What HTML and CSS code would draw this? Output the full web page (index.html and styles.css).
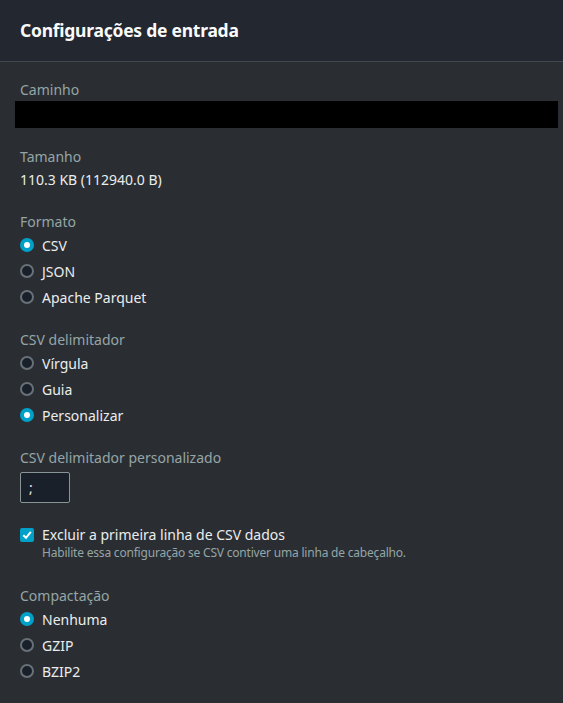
FILE: index.html
```html
<!DOCTYPE html>
<html lang="pt">
<head>
<meta charset="utf-8">
<link rel="stylesheet" href="styles.css">
</head>
<body>
<div class="panel">
  <div class="header"><h2 class="title">Configurações de entrada</h2></div>
  <div class="content">
    <div class="field first">
      <div class="label">Caminho</div>
      <div class="redacted"></div>
    </div>
    <div class="field size">
      <div class="label">Tamanho</div>
      <div class="value">110.3 KB (112940.0 B)</div>
    </div>
    <div class="field format">
      <div class="label">Formato</div>
      <div class="radio checked"><span class="dot"></span><span>CSV</span></div>
      <div class="radio"><span class="dot"></span><span>JSON</span></div>
      <div class="radio"><span class="dot"></span><span>Apache Parquet</span></div>
    </div>
    <div class="field">
      <div class="label">CSV delimitador</div>
      <div class="radio"><span class="dot"></span><span>Vírgula</span></div>
      <div class="radio"><span class="dot"></span><span>Guia</span></div>
      <div class="radio checked"><span class="dot"></span><span>Personalizar</span></div>
    </div>
    <div class="field">
      <div class="label">CSV delimitador personalizado</div>
      <div class="input">;</div>
    </div>
    <div class="field check-field">
      <div class="checkrow">
        <span class="box"><svg width="10" height="10" viewBox="0 0 10 10"><path d="M1.3 5.2 L4 7.8 L8.8 1.8" fill="none" stroke="#fff" stroke-width="2"/></svg></span>
        <div>
          <div class="check-label">Excluir a primeira linha de CSV dados</div>
          <div class="desc">Habilite essa configuração se CSV contiver uma linha de cabeçalho.</div>
        </div>
      </div>
    </div>
    <div class="field comp">
      <div class="label">Compactação</div>
      <div class="radio checked"><span class="dot"></span><span>Nenhuma</span></div>
      <div class="radio"><span class="dot"></span><span>GZIP</span></div>
      <div class="radio"><span class="dot"></span><span>BZIP2</span></div>
    </div>
  </div>
</div>
</body>
</html>
```
FILE: styles.css
```css
html, body {
  margin: 0;
  padding: 0;
  background: #2a2e33;
  font-family: "Noto Sans", "Open Sans", sans-serif;
}
.panel {
  width: 563px;
  min-height: 703px;
  background: #2a2e33;
}
.header {
  background: #232730;
  height: 61px;
  border-bottom: 1px solid #414750;
  padding: 0 20px;
  display: flex;
  align-items: center;
}
.title {
  margin: 0 0 2px 0;
  font-size: 17.5px;
  font-weight: 700;
  color: #fafafa;
  line-height: 24px;
  letter-spacing: -0.25px;
}
.content {
  padding: 0 20px 0 20px;
}
.field {
  margin-top: 20px;
}
.field.first {
  margin-top: 18px;
}
.field.size {
  margin-top: 19px;
}
.field.format {
  margin-top: 22px;
}
.label {
  font-size: 14px;
  line-height: 20px;
  color: #95a5a6;
}
.redacted {
  background: #000;
  height: 27px;
  margin: 1px -15px 0 -5px;
}
.value {
  margin-top: 3px;
  font-size: 14px;
  line-height: 20px;
  color: #eaeded;
}
.radio {
  display: flex;
  align-items: center;
  height: 26px;
  font-size: 14px;
  color: #eaeded;
}
.dot {
  box-sizing: border-box;
  width: 14px;
  height: 14px;
  border-radius: 50%;
  border: 2px solid #687078;
  background: #1a2029;
  margin-right: 8px;
  flex: none;
  position: relative;
}
.radio.checked .dot {
  border: none;
  background: #00a1c9;
}
.radio.checked .dot::after {
  content: "";
  position: absolute;
  width: 6px;
  height: 6px;
  border-radius: 50%;
  background: #fff;
  left: 4px;
  top: 4px;
}
.input {
  box-sizing: border-box;
  margin-top: 4px;
  width: 50px;
  height: 31px;
  border: 1px solid #879596;
  border-radius: 2px;
  background: #1a2029;
  color: #eaeded;
  font-size: 14px;
  line-height: 29px;
  padding-left: 8px;
}
.check-field {
  margin-top: 22px;
}
.checkrow {
  display: flex;
  align-items: flex-start;
}
.box {
  width: 14px;
  height: 14px;
  border-radius: 2px;
  background: #00a1c9;
  margin-top: 3px;
  margin-right: 8px;
  display: flex;
  align-items: center;
  justify-content: center;
  flex: none;
}
.check-label {
  font-size: 14px;
  line-height: 20px;
  color: #eaeded;
}
.desc {
  font-size: 12px;
  line-height: 16px;
  color: #95a5a6;
  letter-spacing: -0.2px;
}
.comp {
  margin-top: 25px;
}
```
